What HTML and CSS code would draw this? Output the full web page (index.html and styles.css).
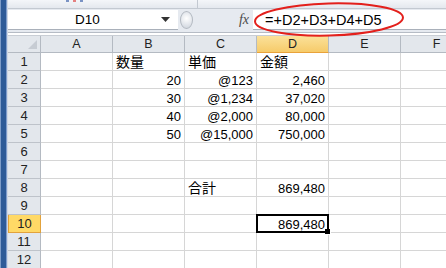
FILE: index.html
```html
<!DOCTYPE html>
<html lang="ja">
<head>
    <meta charset="UTF-8">
    <title>合計の数式</title>
    <link rel="stylesheet" href="styles.css">
</head>
<body>
    <div class="window">
        <div class="edge"></div>
        <div class="main">
            <div class="ribbon">
                <span class="dot blue"></span><span class="dot red"></span><span class="dot blue"></span>
                <span class="sep"></span>
            </div>

            <div class="formula-row">
                <div class="name-box">
                    <span class="name">D10</span>
                    <svg class="arrow" width="9" height="5" viewBox="0 0 9 5"><path d="M0 0h9L4.5 5z" fill="#333"/></svg>
                </div>
                <div class="splitter"><span class="knob"></span></div>
                <div class="fx">fx</div>
                <div class="formula">=+D2+D3+D4+D5</div>
            </div>

            <!-- 数式を囲む赤い丸 -->
            <svg class="mark" width="160" height="38" viewBox="0 0 160 38">
                <ellipse cx="79" cy="18.5" rx="74" ry="16" fill="none" stroke="#e3201c" stroke-width="2" transform="rotate(-1.5 79 18.5)"/>
            </svg>

            <div class="sheet">
                <div class="corner"><span class="tri"></span></div>
                <div class="ch">A</div><div class="ch">B</div><div class="ch">C</div><div class="ch on">D</div><div class="ch">E</div><div class="ch">F</div>

                <div class="rh">1</div><div class="c"></div><div class="c jp">数量</div><div class="c jp">単価</div><div class="c jp">金額</div><div class="c"></div><div class="c"></div>
                <div class="rh">2</div><div class="c"></div><div class="c num">20</div><div class="c num">@123</div><div class="c num">2,460</div><div class="c"></div><div class="c"></div>
                <div class="rh">3</div><div class="c"></div><div class="c num">30</div><div class="c num">@1,234</div><div class="c num">37,020</div><div class="c"></div><div class="c"></div>
                <div class="rh">4</div><div class="c"></div><div class="c num">40</div><div class="c num">@2,000</div><div class="c num">80,000</div><div class="c"></div><div class="c"></div>
                <div class="rh">5</div><div class="c"></div><div class="c num">50</div><div class="c num">@15,000</div><div class="c num">750,000</div><div class="c"></div><div class="c"></div>
                <div class="rh">6</div><div class="c"></div><div class="c"></div><div class="c"></div><div class="c"></div><div class="c"></div><div class="c"></div>
                <div class="rh">7</div><div class="c"></div><div class="c"></div><div class="c"></div><div class="c"></div><div class="c"></div><div class="c"></div>
                <div class="rh">8</div><div class="c"></div><div class="c"></div><div class="c jp">合計</div><div class="c num">869,480</div><div class="c"></div><div class="c"></div>
                <div class="rh">9</div><div class="c"></div><div class="c"></div><div class="c"></div><div class="c"></div><div class="c"></div><div class="c"></div>
                <div class="rh on">10</div><div class="c"></div><div class="c"></div><div class="c"></div><div class="c num sel">869,480</div><div class="c"></div><div class="c"></div>
                <div class="rh">11</div><div class="c"></div><div class="c"></div><div class="c"></div><div class="c"></div><div class="c"></div><div class="c"></div>
                <div class="rh">12</div><div class="c"></div><div class="c"></div><div class="c"></div><div class="c"></div><div class="c"></div><div class="c"></div>
                <div class="rh"></div><div class="c"></div><div class="c"></div><div class="c"></div><div class="c"></div><div class="c"></div><div class="c"></div>
            </div>
        </div>
    </div>
</body>
</html>
```

FILE: styles.css
```css
body {
    margin: 0;
    font-family: "Liberation Sans", "Noto Sans CJK JP", sans-serif;
    font-size: 13px;
    color: #000;
    background-color: #ffffff;
    overflow: hidden;
}

.window {
    display: flex;
    height: 268px;
    overflow: hidden;
}

.edge {
    flex: none;
    width: 8px;
    background: linear-gradient(to right, #7d9cc8 0 1px, #2e5b98 1px 6px, #7f9ccb 6px 7px, #cfd8e4 7px);
}

.main {
    position: relative;
    flex: 1;
    min-width: 0;
    overflow: hidden;
}

.ribbon {
    display: flex;
    align-items: flex-start;
    height: 8px;
    background: linear-gradient(#f4f6f9, #e4e8ee);
    border-bottom: 1px solid #c3c9d1;
}

.dot {
    width: 3px;
    height: 2px;
    margin-right: 4px;
}

.dot.blue {
    background-color: #7a93c4;
}

.dot.red {
    background-color: #e58080;
}

.ribbon .dot:first-child {
    margin-left: 58px;
}

.sep {
    width: 1px;
    height: 8px;
    margin-left: 110px;
    background-color: #c3c9d1;
}

.formula-row {
    display: flex;
    height: 24px;
    box-sizing: border-box;
    padding-top: 1px;
    background-color: #e6eaf0;
    border-bottom: 1px solid #b6bcc5;
}

.name-box {
    display: flex;
    align-items: center;
    width: 170px;
    height: 20px;
    background-color: #ffffff;
    border-bottom: 1px solid #a9b0ba;
    box-sizing: border-box;
}

.name {
    flex: 1;
    text-align: center;
    font-size: 13.5px;
    padding-left: 6px;
}

.arrow {
    margin-right: 8px;
}

.splitter {
    display: flex;
    align-items: center;
    width: 18px;
    height: 20px;
}

.knob {
    width: 13px;
    height: 18px;
    margin-left: 2px;
    border-radius: 50%;
    border: 1px solid #b3b9c1;
    box-sizing: border-box;
    background: radial-gradient(circle at 50% 40%, #ffffff, #e0e4ea 60%, #ccd2da);
}

.fx {
    width: 57px;
    height: 20px;
    box-sizing: border-box;
    padding-right: 4px;
    text-align: right;
    font-family: "Liberation Serif", serif;
    font-style: italic;
    font-size: 14px;
    line-height: 20px;
    color: #4a4a4a;
}

.formula {
    flex: 1;
    height: 20px;
    box-sizing: border-box;
    padding-left: 12px;
    background-color: #ffffff;
    border-bottom: 1px solid #a9b0ba;
    font-size: 14.5px;
    line-height: 20px;
}

.mark {
    position: absolute;
    left: 242px;
    top: 1px;
}

.sheet {
    display: grid;
    grid-template-columns: 33px repeat(6, 72px);
    grid-template-rows: 17px;
    grid-auto-rows: 18px;
    margin-top: 2px;
    border-top: 1px solid #c9ced5;
}

.corner, .ch, .rh {
    box-sizing: border-box;
    background-color: #e3e7ec;
    border-right: 1px solid #b4bac2;
    border-bottom: 1px solid #b4bac2;
    color: #222;
    text-align: center;
}

.corner {
    position: relative;
}

.tri {
    position: absolute;
    right: 3px;
    bottom: 3px;
    border-left: 9px solid transparent;
    border-bottom: 9px solid #c7ccd3;
}

.ch {
    font-size: 12.5px;
    line-height: 16px;
}

.rh {
    font-size: 13px;
    line-height: 18px;
    border-bottom-color: #bec3ca;
}

.ch.on {
    background: linear-gradient(#fbe19a, #f6cb6a);
    border-bottom: 1px solid #e9a23a;
}

.rh.on {
    background-color: #ffd966;
    border: 1px solid #e2a23c;
    border-top: none;
}

.c {
    display: flex;
    align-items: flex-end;
    box-sizing: border-box;
    padding: 0 3px;
    border-right: 1px solid #d6d6d6;
    border-bottom: 1px solid #d6d6d6;
    line-height: 15px;
    white-space: nowrap;
}

.c.jp {
    font-size: 14px;
    line-height: 16px;
}

.c.num {
    justify-content: flex-end;
}

.c.sel {
    position: relative;
}

.c.sel::before {
    content: "";
    position: absolute;
    top: -1px;
    left: -1px;
    right: -1px;
    bottom: -1px;
    border: 2px solid #000;
    z-index: 1;
}

.c.sel::after {
    content: "";
    position: absolute;
    right: -3px;
    bottom: -3px;
    width: 5px;
    height: 5px;
    background-color: #000;
    border: 1px solid #fff;
    border-left: none;
    border-top: none;
    z-index: 2;
}
```
